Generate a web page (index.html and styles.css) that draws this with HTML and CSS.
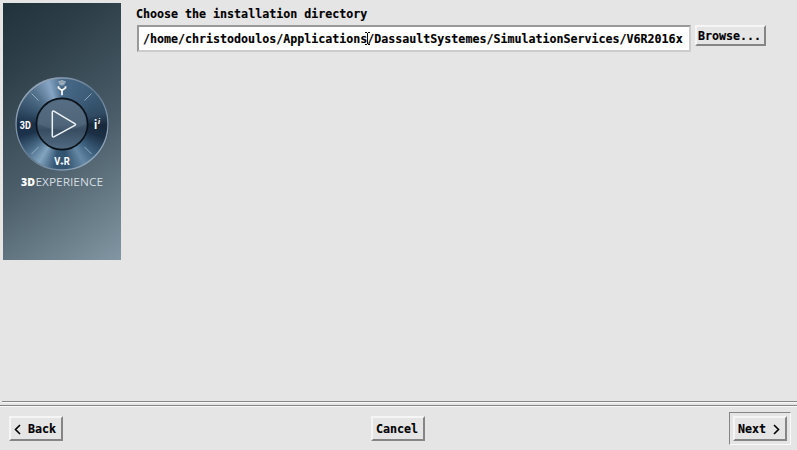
FILE: index.html
```html
<!DOCTYPE html>
<html lang="en">
<head>
<meta charset="utf-8">
<title>Installation directory</title>
<link rel="stylesheet" href="styles.css">
</head>
<body>
<div class="window">
  <main class="content">
    <aside class="banner">
      <div class="wheel">
        <svg viewBox="0 0 94 94" width="94" height="94">
          <defs>
            <linearGradient id="rim" x1="0" y1="0" x2="1" y2="1">
              <stop offset="0" stop-color="#a9b6c4"/><stop offset=".5" stop-color="#64788d"/><stop offset="1" stop-color="#a6b8c9"/>
            </linearGradient>
            <linearGradient id="core" x1="0" y1="0" x2="0" y2="1">
              <stop offset="0" stop-color="#4d657b"/><stop offset=".5" stop-color="#455b70"/><stop offset=".62" stop-color="#384d61"/><stop offset="1" stop-color="#526c84"/>
            </linearGradient>
          </defs>
          <circle cx="47" cy="47" r="46" fill="none" stroke="url(#rim)" stroke-width="1.4"/>
          <circle cx="47" cy="47" r="25.6" fill="url(#core)" stroke="#0a1119" stroke-width="1.6"/>
          <path d="M23 47a24 24 0 0 1 48 0q-24 12-48 0Z" fill="#8aa0b4" opacity=".15"/>
          <g stroke="#a9bfd3" stroke-width=".9" opacity=".85">
            <path d="M16.500 16.500l7 7M76.500 16.500l-7 7M16.500 77l7-7M76.500 77l-7-7"/>
          </g>
          <path d="M37.300 35.300v23.300q0 2 2 1l20.500-11.200q1.500-.9 0-1.800L39.300 34.400q-2-1-2 .9Z" fill="none" stroke="#edf2f6" stroke-width="1.500"/>
          <path d="M43.300 5q3.700-3.200 7.400 0l-1.800 3q-1.900 1.500-3.800 0Z" fill="#8fa2b5"/>
          <path d="M43 5q4-3 8 0M44.300 7q2.700-1.800 5.400 0" fill="none" stroke="#b1bfcb" stroke-width=".7"/>
          <path d="M43.500 9.200v1.700l3.500 2.600 3.500-2.600V9.200M47 13v5.200" fill="none" stroke="#fff" stroke-width="1.700"/>
          <g class="mark">
            <text x="4.800" y="51.600" textLength="11" lengthAdjust="spacingAndGlyphs">3D</text>
            <text x="39.300" y="87.500" textLength="6" lengthAdjust="spacingAndGlyphs">V</text>
            <text x="48.700" y="87.500" textLength="6" lengthAdjust="spacingAndGlyphs">R</text>
            <text class="info" x="79" y="52">i</text>
            <text class="power" x="83" y="46.800">i</text>
          </g>
          <path d="M45.500 86.500h3M47 85v3" stroke="#e3ebf2"/>
        </svg>
      </div>
      <svg class="brand" viewBox="0 0 86 14" width="86" height="14">
        <text class="brand-bold" x="2" y="10.500" textLength="14" lengthAdjust="spacingAndGlyphs">3D</text>
        <text class="brand-light" x="16.500" y="10.500" textLength="67.500" lengthAdjust="spacingAndGlyphs">EXPERIENCE</text>
      </svg>
    </aside>
    <section class="form">
      <div class="title">Choose the installation directory</div>
      <div class="row">
        <div class="field">/home/christodoulos/Applications<svg class="cursor" viewBox="0 0 5 13" width="5" height="13"><path d="M0 .5h2M3 .5h2M2.500 1v11M0 12.500h2M3 12.500h2" stroke="#000"/></svg>/DassaultSystemes/SimulationServices/V6R2016x</div>
        <div class="button browse">Browse...</div>
      </div>
    </section>
  </main>
  <footer class="footer">
    <div class="button"><svg class="chevron" viewBox="0 0 7 11" width="7" height="11"><path d="M6 1L1.500 5.500 6 10"/></svg> Back</div>
    <div class="button cancel">Cancel</div>
    <div class="default"><div class="button">Next <svg class="chevron" viewBox="0 0 7 11" width="7" height="11"><path d="M1 1l4.500 4.500L1 10"/></svg></div></div>
  </footer>
</div>
</body>
</html>
```

FILE: styles.css
```css
* { box-sizing: border-box; }
body {
  margin: 0;
  background: #e5e5e5;
  color: #000;
  font: bold 11.65px/15px "DejaVu Sans Mono", monospace;
  -webkit-text-stroke: .15px #000;
}
.window, .content, .form, .row, .footer, .banner { display: flex; }
.window {
  flex-direction: column;
  width: 797px;
  height: 450px;
}
.content {
  height: 403px;
  margin-left: 2px;
  padding: 3px 0 0 1px;
  border-bottom: 1px solid #fafafa;
  box-shadow: inset 0 -1px #858585;
}
.banner {
  flex-direction: column;
  align-items: center;
  width: 118px;
  height: 257px;
  padding-top: 73.5px;
  background: linear-gradient(144deg, #22323b 0%, #2d3e48 20%, #4b5e69 58%, #8296a3 100%);
  -webkit-text-stroke: 0;
}
.wheel {
  width: 94px;
  height: 94px;
  border-radius: 50%;
  background: conic-gradient(#476988 0deg, #3d5d79 40deg, #304b63 75deg, #17283a 92deg, #1c3045 108deg, #3d607e 133deg, #6488a5 151deg, #32536f 174deg, #365875 190deg, #82a4bf 211deg, #4b6d8a 230deg, #1c324a 254deg, #1a3048 270deg, #35516a 292deg, #56738e 320deg, #86a5c4 342deg, #476988 360deg);
}
.wheel svg, .brand { display: block; }
.mark { font: bold 11px Roboto, sans-serif; fill: #fff; }
.mark .info { font-size: 12px; }
.mark .power { font-size: 8px; font-style: italic; }
.brand { margin-top: 4.5px; }
.brand-bold { font: 800 10.5px "Open Sans", sans-serif; fill: #fff; }
.brand-light { font: 400 10.5px "Open Sans", sans-serif; fill: #d5dde1; }
.form {
  flex-direction: column;
  margin: 4px 0 0 16px;
}
.title { height: 18px; margin-left: -1px; }
.row { align-items: flex-start; gap: 4px; }
.field {
  position: relative;
  width: 554px;
  height: 27px;
  padding: 5px 0 0 4px;
  border: 2px solid;
  border-color: #999 #ccc #ccc #999;
  background: #fff;
  white-space: nowrap;
}
.cursor { position: absolute; left: 226px; top: 5px; }
.button {
  height: 25px;
  padding: 4px 3px 0;
  border: 2px solid;
  border-color: #f5f5f5 #858585 #858585 #f5f5f5;
  width: 54px;
  white-space: pre;
}
.browse { width: 71px; height: 21px; padding: 2px 0 0 1px; }
.footer {
  justify-content: space-between;
  align-items: center;
  height: 45px;
  margin-top: 2px;
  padding: 0 6px 0 9px;
  border-top: 1px solid #858585;
  box-shadow: inset 0 1px #fafafa;
}
.cancel { margin-left: 4px; }
.default {
  width: 62px;
  height: 33px;
  padding: 3px;
  border: 1px solid;
  border-color: #858585 #fafafa #fafafa #858585;
}
.chevron { vertical-align: -2px; fill: none; stroke: #000; stroke-width: 1.6; }
```
